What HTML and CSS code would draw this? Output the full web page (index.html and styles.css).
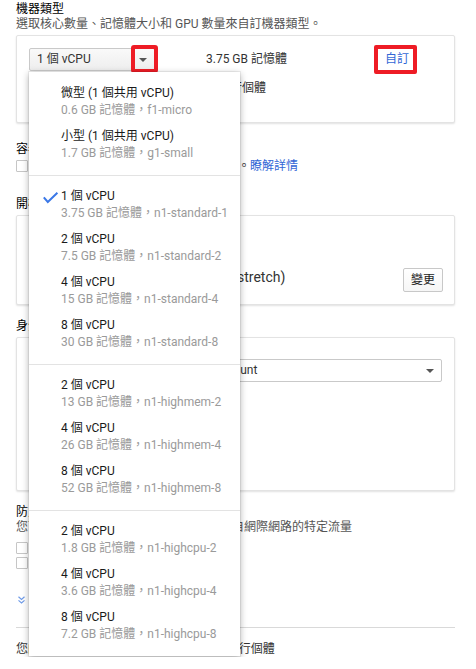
FILE: index.html
```html
<!DOCTYPE html>
<html lang="zh-Hant">
<head>
<meta charset="utf-8">
<title>機器類型</title>
<link rel="stylesheet" href="styles.css">
</head>
<body>
<div class="page">
  <section class="sec">
    <div class="label">機器類型</div>
    <div class="sub">選取核心數量、記憶體大小和 GPU 數量來自訂機器類型。</div>
    <div class="card card-machine">
      <div class="mrow">
        <div class="select select-cpu">
          <span class="select-text">1 個 vCPU</span>
          <span class="select-arrow"></span>
          <span class="hl hl-arrow"></span>
          <div class="menu">
            <div class="mgroup">
              <div class="mitem"><span class="mcheck"></span><div class="mtext"><div class="l1">微型 (1 個共用 vCPU)</div><div class="l2">0.6 GB 記憶體，f1-micro</div></div></div>
              <div class="mitem"><span class="mcheck"></span><div class="mtext"><div class="l1">小型 (1 個共用 vCPU)</div><div class="l2">1.7 GB 記憶體，g1-small</div></div></div>
            </div>
            <div class="mgroup">
              <div class="mitem"><span class="mcheck"><svg class="check" width="16" height="12" viewBox="0 0 16 12"><polyline points="0.8,5.4 4.8,10 14.4,0.8" fill="none" stroke="#3b78e7" stroke-width="2"/></svg></span><div class="mtext"><div class="l1">1 個 vCPU</div><div class="l2">3.75 GB 記憶體，n1-standard-1</div></div></div>
              <div class="mitem"><span class="mcheck"></span><div class="mtext"><div class="l1">2 個 vCPU</div><div class="l2">7.5 GB 記憶體，n1-standard-2</div></div></div>
              <div class="mitem"><span class="mcheck"></span><div class="mtext"><div class="l1">4 個 vCPU</div><div class="l2">15 GB 記憶體，n1-standard-4</div></div></div>
              <div class="mitem"><span class="mcheck"></span><div class="mtext"><div class="l1">8 個 vCPU</div><div class="l2">30 GB 記憶體，n1-standard-8</div></div></div>
            </div>
            <div class="mgroup">
              <div class="mitem"><span class="mcheck"></span><div class="mtext"><div class="l1">2 個 vCPU</div><div class="l2">13 GB 記憶體，n1-highmem-2</div></div></div>
              <div class="mitem"><span class="mcheck"></span><div class="mtext"><div class="l1">4 個 vCPU</div><div class="l2">26 GB 記憶體，n1-highmem-4</div></div></div>
              <div class="mitem"><span class="mcheck"></span><div class="mtext"><div class="l1">8 個 vCPU</div><div class="l2">52 GB 記憶體，n1-highmem-8</div></div></div>
            </div>
            <div class="mgroup">
              <div class="mitem"><span class="mcheck"></span><div class="mtext"><div class="l1">2 個 vCPU</div><div class="l2">1.8 GB 記憶體，n1-highcpu-2</div></div></div>
              <div class="mitem"><span class="mcheck"></span><div class="mtext"><div class="l1">4 個 vCPU</div><div class="l2">3.6 GB 記憶體，n1-highcpu-4</div></div></div>
              <div class="mitem"><span class="mcheck"></span><div class="mtext"><div class="l1">8 個 vCPU</div><div class="l2">7.2 GB 記憶體，n1-highcpu-8</div></div></div>
            </div>
          </div>
        </div>
        <div class="mem">3.75 GB 記憶體</div>
        <a class="link custom">自訂</a>
      </div>
      <div class="mnote">可執行個體</div>
    </div>
  </section>

  <section class="sec sec-container">
    <div class="label">容器</div>
    <div class="check-row"><span class="cb"></span><span>將容器映像檔部署到這個 VM 執行個體。<a class="link">瞭解詳情</a></span></div>
  </section>

  <section class="sec sec-boot">
    <div class="label">開機磁碟</div>
    <div class="card card-boot">
      <div class="boot-line">新的 10 GB 標準永久磁碟</div>
      <div class="boot-row">
        <span class="boot-key">映像檔</span>
        <span class="boot-val">Debian GNU/Linux 9 (stretch)</span>
        <button class="btn">變更</button>
      </div>
    </div>
  </section>

  <section class="sec sec-id">
    <div class="label">身分及 API 存取權</div>
    <div class="card card-id">
      <div class="field-label">服務帳戶</div>
      <div class="select select-sa">
        <span class="select-text">Compute Engine default service account</span>
        <span class="select-arrow"></span>
      </div>
      <div class="field-label scope-label">存取權範圍</div>
      <div class="radio-row"><span class="radio on"></span>允許預設存取權</div>
      <div class="radio-row"><span class="radio"></span>允許所有 API 完整存取權</div>
      <div class="radio-row"><span class="radio"></span>針對每個 API 設定存取權</div>
    </div>
  </section>

  <section class="sec sec-fw">
    <div class="label">防火牆</div>
    <div class="sub">您可以新增標記和防火牆規則，以允許來自網際網路的特定流量</div>
    <div class="fw-rows">
      <div class="fw-row"><span class="cb"></span>允許 HTTP 流量</div>
      <div class="fw-row"><span class="cb"></span>允許 HTTPS 流量</div>
    </div>
    <div class="more-row">
      <svg class="chev" width="7" height="8" viewBox="0 0 7 8"><polyline points="0.5,0.8 3.5,3.4 6.5,0.8" fill="none" stroke="#6f9be8" stroke-width="1.2"/><polyline points="0.5,4.4 3.5,7 6.5,4.4" fill="none" stroke="#6f9be8" stroke-width="1.2"/></svg>
      <a class="link">管理、安全性、磁碟、網路、單獨租用</a>
    </div>
  </section>

  <div class="divider"></div>
  <div class="bottom-text">您的配額允許這個 (最多 24) 個區域同時執行個體</div>
</div>
</body>
</html>
```

FILE: styles.css
```css
* { box-sizing: border-box; }
html, body { margin: 0; padding: 0; background: #fff; }
body {
  font-family: Roboto, "Noto Sans CJK TC", sans-serif;
  font-size: 12px;
  line-height: 15px;
  color: #212121;
}
.page {
  position: relative;
  width: 476px;
  padding: 2px 21px 0 16px;
}
.label { color: #000; line-height: 15px; white-space: nowrap; }
.sub { color: #555; line-height: 15px; white-space: nowrap; }
.link { color: #3367d6; text-decoration: none; }

.card {
  margin-top: 3px;
  background: #fff;
  border: 1px solid #e3e3e3;
  border-radius: 2px;
  box-shadow: 0 1px 2px rgba(0, 0, 0, 0.12);
}

/* machine type card */
.card-machine { padding: 9px 12px 26px 12px; }
.mrow { display: flex; align-items: center; height: 29px; }
.select {
  position: relative;
  display: flex;
  align-items: center;
  height: 23px;
  border: 1px solid #c9c9c9;
  border-radius: 2px;
}
.select-cpu { width: 126px; flex: none; background: linear-gradient(#f9f9f9, #eeeeee); }
.select-text { flex: 1; padding-left: 7px; color: #333; white-space: nowrap; overflow: hidden; }
.select-arrow { width: 22px; flex: none; display: flex; justify-content: center; align-items: center; }
.select-arrow::before {
  content: "";
  border-left: 4px solid transparent;
  border-right: 4px solid transparent;
  border-top: 4px solid #555;
}
.hl {
  position: absolute;
  border: 4px solid #ee1c25;
  border-radius: 3px;
}
.hl-arrow { right: -4px; top: -4px; width: 27px; height: 28px; }
.mem { margin-left: 51px; flex: 1; color: #333; white-space: nowrap; }
.custom {
  border: 4px solid #ee1c25;
  border-radius: 2px;
  padding: 3px 4px 3px 7px;
  margin-right: 25px;
  line-height: 15px;
}
.mnote { margin-top: 7px; margin-left: 177px; color: #333; }

/* dropdown menu */
.menu {
  position: absolute;
  left: -1px;
  top: 23px;
  width: 211px;
  padding-top: 1px;
  background: #fff;
  box-shadow: 0 0 0 1px rgba(0, 0, 0, 0.06), 0 2px 7px rgba(0, 0, 0, 0.32);
  z-index: 10;
}
.mgroup { padding: 8px 0; }
.mgroup + .mgroup { border-top: 1px solid #e3e3e3; }
.mitem { display: flex; height: 43px; padding-top: 4px; }
.mcheck { width: 32px; flex: none; }
.check { display: block; margin: 4px 0 0 14px; }
.mtext { white-space: nowrap; }
.l1 { line-height: 17px; color: #1a1a1a; }
.l2 { line-height: 17px; color: #9a9a9a; }

/* container */
.sec-container { margin-top: 19px; }
.check-row { display: flex; align-items: center; height: 16px; margin-top: 1px; color: #333; white-space: nowrap; }
.cb {
  width: 12px;
  height: 12px;
  flex: none;
  border: 1px solid #c6c6c6;
  border-radius: 1px;
  background: #fff;
  margin-right: 6px;
}

/* boot disk */
.sec-boot { margin-top: 23px; }
.card-boot { padding: 12px 11px 12px 12px; }
.boot-line { line-height: 15px; color: #333; }
.boot-row { display: flex; align-items: flex-start; height: 24px; margin-top: 25px; }
.boot-key { width: 74px; flex: none; line-height: 18px; color: #555; }
.boot-val { flex: 1; font-size: 14px; line-height: 18px; color: #333; white-space: nowrap; }
.btn {
  width: 40px;
  height: 24px;
  padding: 0;
  font: inherit;
  line-height: 22px;
  color: #222;
  background: linear-gradient(#fff, #f6f6f6);
  border: 1px solid #c8c8c8;
  border-radius: 2px;
}

/* identity */
.sec-id { margin-top: 14px; }
.card-id { padding: 6px 12px 23px 12px; }
.field-label { line-height: 15px; color: #333; }
.select-sa { width: 413px; background: #fff; }
.select-sa .select-text { padding-left: 12px; }
.scope-label { margin-top: 10px; }
.radio-row { display: flex; align-items: center; height: 20px; color: #333; white-space: nowrap; }
.radio {
  width: 12px;
  height: 12px;
  border: 1px solid #bbb;
  border-radius: 50%;
  margin: 0 6px 0 2px;
}
.radio.on { border: 4px solid #3b78e7; }

/* firewall */
.sec-fw { margin-top: 14px; }
.fw-rows { margin-top: 5px; }
.fw-row { display: flex; align-items: center; height: 15px; color: #333; white-space: nowrap; }
.more-row { display: flex; align-items: center; height: 15px; margin-top: 22px; white-space: nowrap; }
.chev { display: block; margin: 0 5px 0 2px; }

.divider { margin-top: 20px; height: 1px; background: #d9d9d9; }
.bottom-text { margin-top: 14px; line-height: 15px; color: #333; white-space: nowrap; }
```
